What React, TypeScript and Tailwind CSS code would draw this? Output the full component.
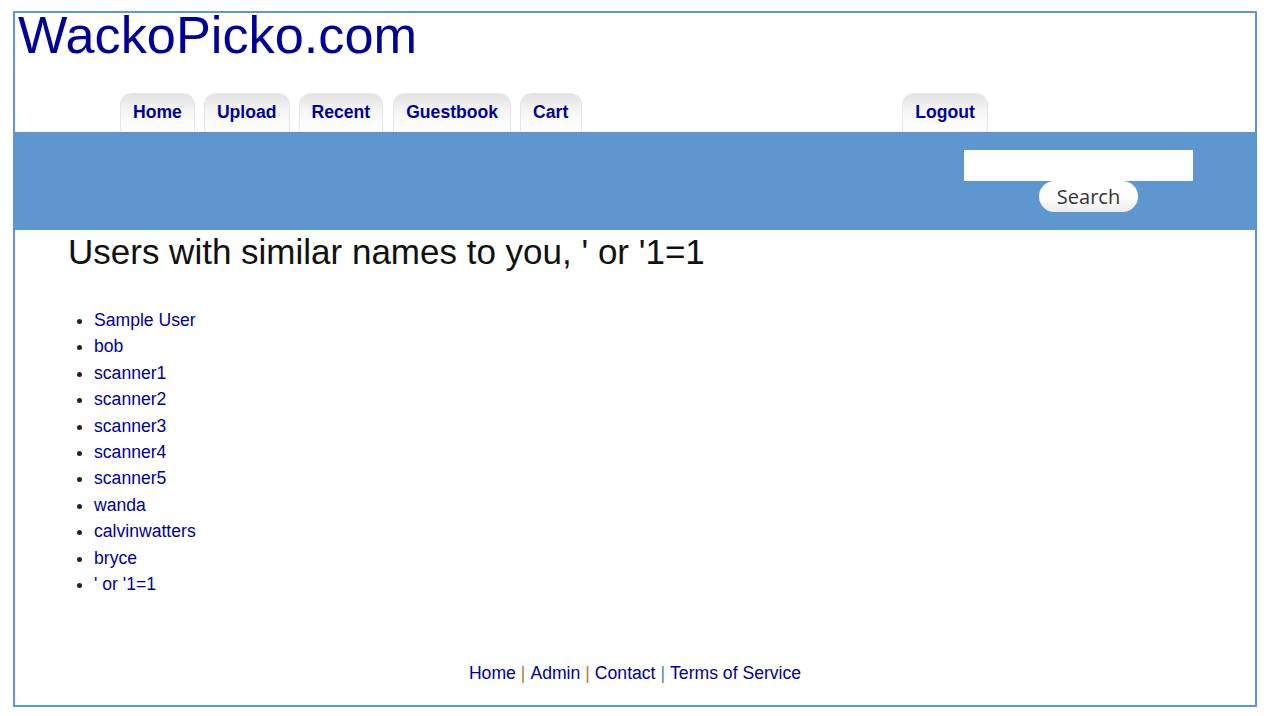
import React from "react";

const tabs = [
  { label: "Home", cls: "" },
  { label: "Upload", cls: "" },
  { label: "Recent", cls: "" },
  { label: "Guestbook", cls: "ml-[1px]" },
  { label: "Cart", cls: "pr-[13px]" },
];

const users = [
  "Sample User",
  "bob",
  "scanner1",
  "scanner2",
  "scanner3",
  "scanner4",
  "scanner5",
  "wanda",
  "calvinwatters",
  "bryce",
  "' or '1=1",
];

function Tab({ label, className = "" }: { label: string; className?: string }) {
  return (
    <a
      href="#"
      className={`flex h-[39px] items-center justify-center rounded-t-[12px] border border-b-0 border-[#e6e6e6] bg-gradient-to-b from-[#e3e3e3] via-[#f7f7f7] to-white px-[12px] pb-[2px] text-[17.6px] font-bold text-[#000099] ${className}`}
    >
      {label}
    </a>
  );
}

export default function App() {
  return (
    <div
      className="min-h-[716px] bg-white"
      style={{ fontFamily: '"Liberation Sans", Arial, sans-serif' }}
    >
      <div className="mx-[13px] pt-[11px]">
        <div className="flex h-[696px] w-[1244px] flex-col border-2 border-[#5e96cf]">
          {/* Title */}
          <div className="h-[80px] pl-[3px]">
            <a href="#" className="block text-[52.3px] leading-[44px] text-[#000099]">
              WackoPicko.com
            </a>
          </div>

          {/* Tabs */}
          <div className="flex h-[39px] items-end gap-[9px] pl-[105px]">
            {tabs.map((t) => (
              <Tab key={t.label} label={t.label} className={t.cls} />
            ))}
            <Tab label="Logout" className="ml-[311px]" />
          </div>

          {/* Blue band */}
          <div className="flex h-[98px] justify-end bg-[#5e96cf] pr-[62px] pt-[18px]">
            <div className="flex w-[229px] flex-col">
              <input
                type="text"
                className="h-[31px] w-[229px] border-0 bg-white outline-none"
              />
              <button
                className="ml-[75px] flex h-[31px] w-[99px] items-center justify-center rounded-full bg-gradient-to-b from-white via-white to-[#ececec] text-[20px] font-medium text-[#333333]"
                style={{ fontFamily: '"Open Sans", "DejaVu Sans", sans-serif' }}
              >
                Search
              </button>
            </div>
          </div>

          {/* Content */}
          <div className="pl-[53px] pt-[2px]">
            <h2 className="text-[35px] leading-[40px] font-normal text-[#111111]">
              Users with similar names to you, ' or '1=1
            </h2>
          </div>
          <ul className="mt-[35px] list-disc pl-[79px] text-[17.6px] leading-[26.4px] text-[#222222] marker:text-[#222222]">
            {users.map((u) => (
              <li key={u}>
                <a href="#" className="text-[#000099]">
                  {u}
                </a>
              </li>
            ))}
          </ul>

          {/* Footer */}
          <div className="mt-auto mb-[19px] flex justify-center text-[17.6px] leading-[26px]">
            <a href="#" className="text-[#000099]">Home</a>
            <span className="mx-[5px] text-[#b8742f]">|</span>
            <a href="#" className="text-[#000099]">Admin</a>
            <span className="mx-[5px] text-[#b8742f]">|</span>
            <a href="#" className="text-[#000099]">Contact</a>
            <span className="mx-[5px] text-[#4a86c8]">|</span>
            <a href="#" className="text-[#000099]">Terms of Service</a>
          </div>
        </div>
      </div>
    </div>
  );
}
